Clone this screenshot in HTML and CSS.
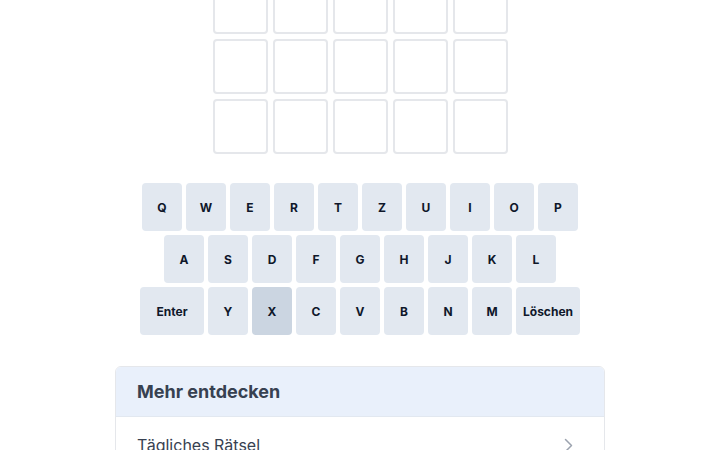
FILE: index.html
```html
<!DOCTYPE html>
<html lang="de">
<head>
<meta charset="utf-8">
<title>Wortspiel</title>
<link rel="stylesheet" href="styles.css">
</head>
<body>
<main class="page">
  <div class="board">
    <div class="tile"></div><div class="tile"></div><div class="tile"></div><div class="tile"></div><div class="tile"></div>
    <div class="tile"></div><div class="tile"></div><div class="tile"></div><div class="tile"></div><div class="tile"></div>
    <div class="tile"></div><div class="tile"></div><div class="tile"></div><div class="tile"></div><div class="tile"></div>
  </div>

  <div class="keyboard">
    <div class="krow">
      <button class="key">Q</button><button class="key">W</button><button class="key">E</button><button class="key">R</button><button class="key">T</button><button class="key">Z</button><button class="key">U</button><button class="key">I</button><button class="key">O</button><button class="key">P</button>
    </div>
    <div class="krow">
      <button class="key">A</button><button class="key">S</button><button class="key">D</button><button class="key">F</button><button class="key">G</button><button class="key">H</button><button class="key">J</button><button class="key">K</button><button class="key">L</button>
    </div>
    <div class="krow">
      <button class="key wide">Enter</button><button class="key">Y</button><button class="key active">X</button><button class="key">C</button><button class="key">V</button><button class="key">B</button><button class="key">N</button><button class="key">M</button><button class="key wide">Löschen</button>
    </div>
  </div>

  <section class="card">
    <h2 class="card-head">Mehr entdecken</h2>
    <a class="card-item" href="#">
      <span>Tägliches Rätsel</span>
      <svg class="chev" width="20" height="20" viewBox="0 0 20 20" fill="none" stroke="#9ca3af" stroke-width="1.5" stroke-linecap="round" stroke-linejoin="round"><path d="M7.5 4.5l6 6-6 6"/></svg>
    </a>
  </section>
</main>
</body>
</html>
```
FILE: styles.css
```css
* { box-sizing: border-box; }
html, body { margin: 0; padding: 0; background: #ffffff; }
body { font-family: Inter, "Noto Sans", sans-serif; color: #111827; overflow: hidden; }

.page {
  display: flex;
  flex-direction: column;
  align-items: center;
}

.board {
  margin-top: -21px;
  display: grid;
  grid-template-columns: repeat(5, 55px);
  grid-auto-rows: 55px;
  gap: 5px;
}
.tile {
  border: 2px solid #e5e7eb;
  border-radius: 4px;
  background: #fff;
}

.keyboard {
  margin-top: 29px;
  display: flex;
  flex-direction: column;
  align-items: center;
  gap: 4px;
}
.krow { display: flex; gap: 4px; }
.key {
  width: 40px;
  height: 48px;
  border: none;
  border-radius: 4px;
  background: #e2e8f0;
  color: #0f172a;
  font-family: Inter, "Noto Sans", sans-serif;
  font-size: 12px;
  font-weight: 700;
  padding: 0;
  display: flex;
  align-items: center;
  justify-content: center;
}
.key.wide { width: 64px; }
.key.active { background: #cbd5e1; }

.card {
  margin-top: 31px;
  width: 490px;
  border: 1px solid #e5e7eb;
  border-radius: 6px;
  overflow: hidden;
}
.card-head {
  margin: 0;
  height: 50px;
  display: flex;
  align-items: center;
  padding: 0 21px;
  background: #e9f0fb;
  border-bottom: 1px solid #e2e8f0;
  font-size: 18px;
  font-weight: 700;
  color: #374151;
}
.card-item {
  display: flex;
  align-items: center;
  justify-content: space-between;
  height: 56px;
  padding: 0 26px 0 21px;
  color: #374151;
  text-decoration: none;
  font-size: 16px;
}
.chev { flex: none; }
```
